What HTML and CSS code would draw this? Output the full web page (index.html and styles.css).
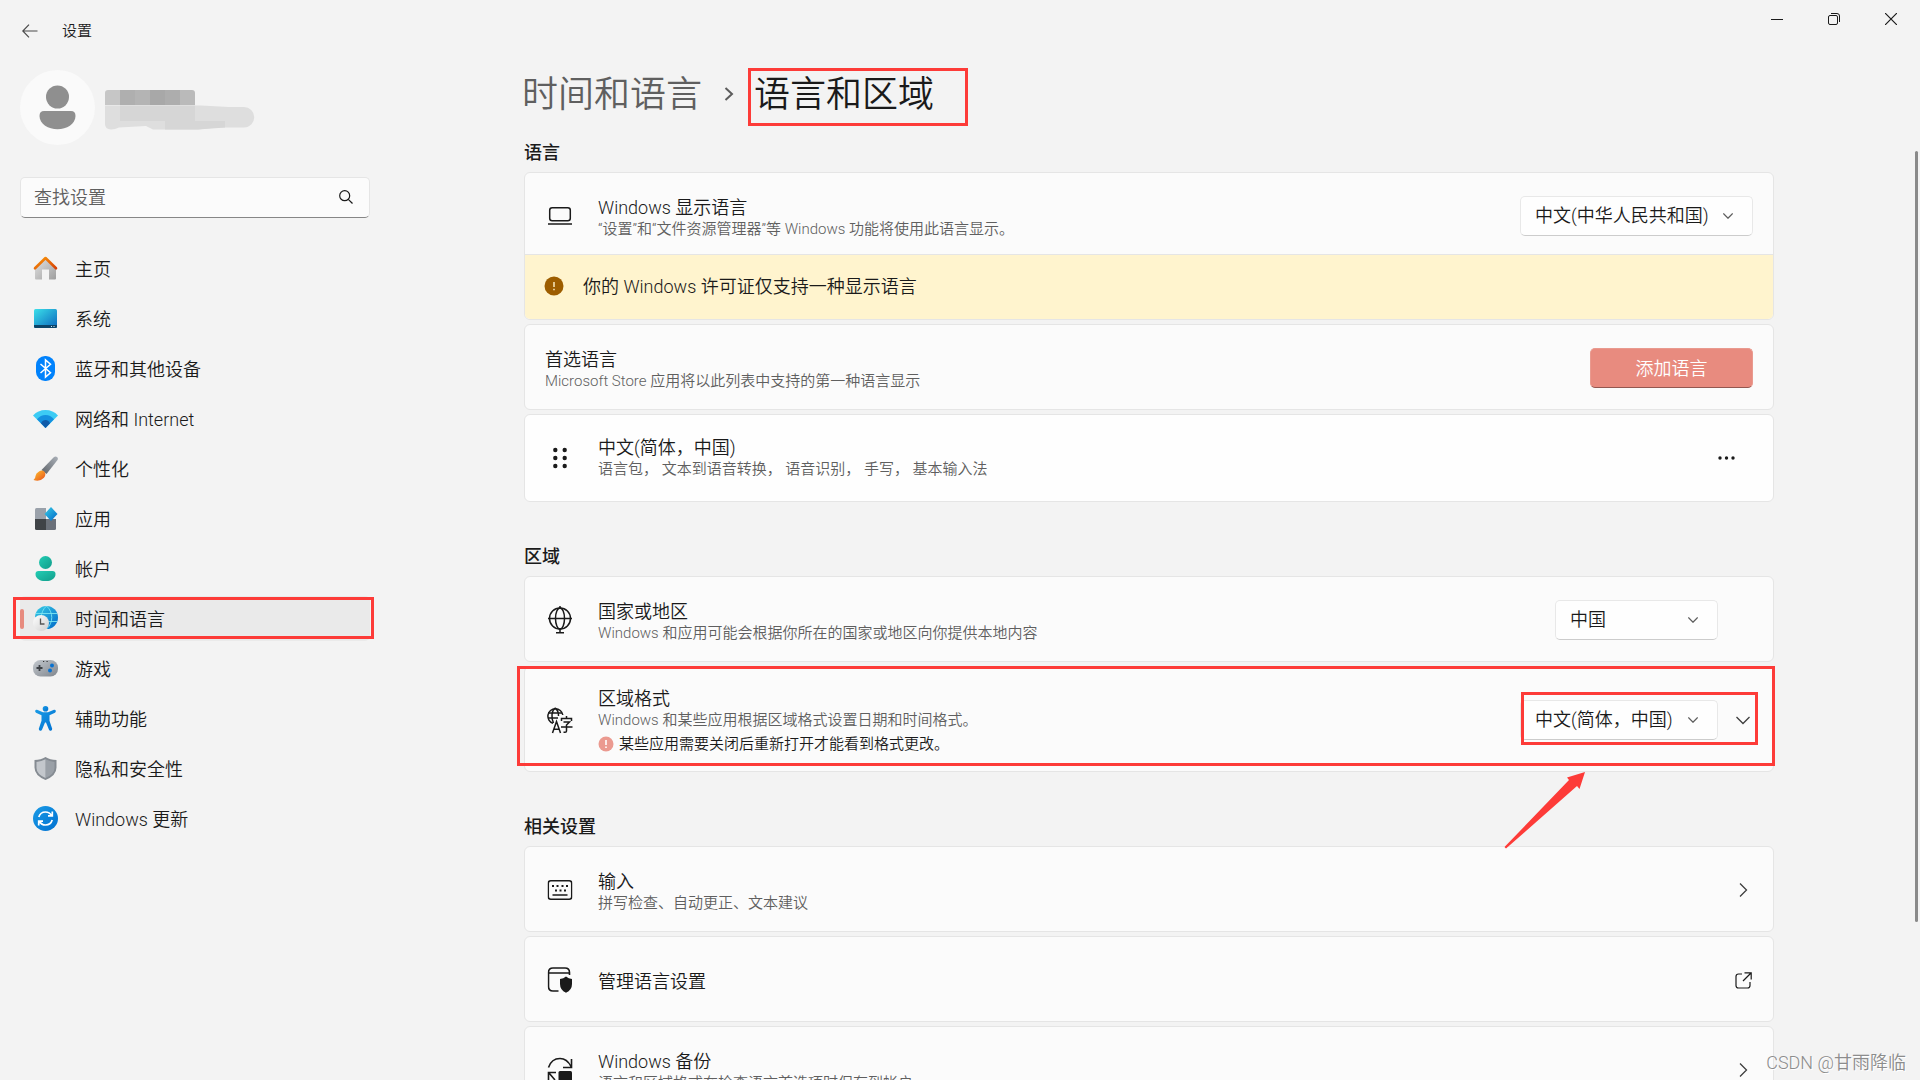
FILE: index.html
```html
<!DOCTYPE html>
<html lang="zh-CN">
<head>
<meta charset="utf-8">
<title>设置</title>
<link rel="stylesheet" href="styles.css">
</head>
<body>
<svg class="defs" width="0" height="0" aria-hidden="true">
  <defs>
    <linearGradient id="g-roof" x1="0" y1="0" x2="1" y2="1"><stop offset="0" stop-color="#fb9b0b"/><stop offset="1" stop-color="#d63f05"/></linearGradient>
    <linearGradient id="g-wall" x1="0" y1="0" x2="1" y2="1"><stop offset="0" stop-color="#e4e4e4"/><stop offset="1" stop-color="#9d9d9d"/></linearGradient>
    <linearGradient id="g-screen" x1="0" y1="0" x2="1" y2="1"><stop offset="0" stop-color="#3be0ea"/><stop offset="1" stop-color="#0a66bd"/></linearGradient>
    <linearGradient id="g-handle" x1="1" y1="0" x2="0" y2="1"><stop offset="0" stop-color="#aab0b8"/><stop offset="1" stop-color="#5d6268"/></linearGradient>
    <linearGradient id="g-bristle" x1="0" y1="0" x2="1" y2="1"><stop offset="0" stop-color="#ffc42e"/><stop offset="1" stop-color="#e8501c"/></linearGradient>
    <linearGradient id="g-green" x1="0" y1="0" x2="1" y2="1"><stop offset="0" stop-color="#23cdb4"/><stop offset="1" stop-color="#119c8a"/></linearGradient>
    <linearGradient id="g-blue" x1="0" y1="0" x2="1" y2="1"><stop offset="0" stop-color="#38cde6"/><stop offset="1" stop-color="#0067c8"/></linearGradient>
    <linearGradient id="g-azure" x1="0" y1="0" x2="1" y2="1"><stop offset="0" stop-color="#1a9be6"/><stop offset="1" stop-color="#0070d0"/></linearGradient>
    <linearGradient id="g-steel" x1="0" y1="0" x2="1" y2="1"><stop offset="0" stop-color="#c3c8ce"/><stop offset="1" stop-color="#80868d"/></linearGradient>
    <linearGradient id="g-clock" x1="0" y1="0" x2="1" y2="1"><stop offset="0" stop-color="#ffffff"/><stop offset="1" stop-color="#cfcfcf"/></linearGradient>
  </defs>
</svg>

<header class="titlebar">
  <button class="back" type="button" aria-label="返回">
    <svg width="16" height="14" viewBox="0 0 16 14"><path d="M15.500 7H1M7 .7L.8 7l6.200 6.300" fill="none" stroke="#4a4a4a" stroke-width="1.200"/></svg>
  </button>
  <span class="app-name">设置</span>
  <div class="window-controls">
    <button type="button" aria-label="最小化"><svg width="12" height="12" viewBox="0 0 12 12"><path d="M0 6.500h12" stroke="#1a1a1a"/></svg></button>
    <button type="button" aria-label="还原"><svg width="12" height="12" viewBox="0 0 12 12" fill="none" stroke="#1a1a1a"><rect x=".5" y="2.500" width="9" height="9" rx="1.500"/><path d="M3 .5h6a2.500 2.500 0 0 1 2.500 2.500v6"/></svg></button>
    <button type="button" aria-label="关闭"><svg width="12" height="12" viewBox="0 0 12 12"><path d="M0 0l12 12M12 0L0 12" stroke="#1a1a1a" stroke-width="1.200"/></svg></button>
  </div>
</header>

<div class="shell">
  <aside class="sidebar">
    <div class="profile">
      <svg class="avatar" viewBox="0 0 75 75"><circle cx="37.500" cy="37.500" r="37.500" fill="#fafafa"/><circle cx="37.500" cy="27" r="11.500" fill="#8f8f8f"/><path d="M24 41h27q4.500 0 4.500 5c0 8-9 13.300-18 13.300S19.500 54 19.500 46q0-5 4.500-5z" fill="#8f8f8f"/></svg>
      <svg class="masked-name" viewBox="0 0 150 40">
        <path d="M0 15.500h96l28 1.500h15a10 10 0 0 1 0 20.500h-28l-18 2H48l-7-3.500-27 1.500q-4 2-8 2Q0 39 0 34V20z" fill="#dedede"/>
        <path d="M15 15.500h75V31h30v6.500l-27 2H60V31H15z" fill="#d6d6d6"/>
        <path d="M3 0h12v15H0V3q0-3 3-3z" fill="#c6c6c6"/><path d="M15 0h15v15H15z" fill="#afafaf"/><path d="M30 0h15v15H30z" fill="#b4b4b4"/><path d="M45 0h15v15H45z" fill="#a8a8a8"/><path d="M60 0h15v15H60z" fill="#adadad"/><path d="M75 0h12q3 0 3 3v12H75z" fill="#bababa"/>
      </svg>
    </div>

    <div class="search">
      <input type="text" placeholder="查找设置" aria-label="查找设置">
      <svg width="14" height="14" viewBox="0 0 14 14" fill="none" stroke="#1a1a1a" stroke-width="1.200"><circle cx="5.700" cy="5.700" r="5"/><path d="M9.300 9.300l4.200 4.200"/></svg>
    </div>

    <nav class="nav">
      <a href="#home">
        <svg viewBox="0 0 25 25"><path d="M2 11L12.500 2 23 11v11.500q0 1-1 1h-6v-10H9v10H3q-1 0-1-1z" fill="url(#g-wall)"/><path d="M2 12.300L12.500 2 23 12.300" fill="none" stroke="url(#g-roof)" stroke-width="2.600" stroke-linecap="round" stroke-linejoin="round"/></svg>
        <span>主页</span></a>
      <a href="#system">
        <svg viewBox="0 0 25 25"><rect x="1" y="3" width="23" height="19" rx="1.500" fill="url(#g-screen)"/><path d="M1 19h23v1.500q0 1.500-1.500 1.500h-20Q1 22 1 20.500z" fill="#0b4468"/><path d="M18 20h1v1h-1zM20.500 20h1v1h-1z" fill="#cde8f5"/></svg>
        <span>系统</span></a>
      <a href="#bluetooth">
        <svg viewBox="0 0 25 25"><rect x="3" y="0" width="19" height="25" rx="9" fill="#0082fc"/><path d="M7.500 8l10 8.700-5 4.300V4l5 4.300-10 8.700" fill="none" stroke="#fff" stroke-width="1.500"/></svg>
        <span>蓝牙和其他设备</span></a>
      <a href="#network">
        <svg viewBox="0 0 25 25"><path d="M12.500 22L0 9.500Q5 4 12.500 4T25 9.500z" fill="#3ccbf4"/><path d="M12.500 22L4 13.300Q7.500 9 12.500 9t8.500 4.300z" fill="#1490df"/><path d="M12.500 22L8 17.300Q9.700 14 12.500 14t4.500 3.300z" fill="#0f5aa8"/></svg>
        <span>网络和 Internet</span></a>
      <a href="#personalization">
        <svg viewBox="0 0 25 25"><path d="M20.500 1.500q2-1.500 3.500-.5t.5 3L13.500 18l-5-4z" fill="url(#g-handle)"/><path d="M6 15.500q3-2.200 5.500.2 2 2.700-.5 6-4 4.300-10.500 2.300 2-1.500 2-4 .3-3 3.500-4.500z" fill="url(#g-bristle)"/></svg>
        <span>个性化</span></a>
      <a href="#apps">
        <svg viewBox="0 0 25 25"><path d="M3.500 2H13v11H2V3.500Q2 2 3.500 2z" fill="#9aa1aa"/><path d="M2 13h11v11H3.500Q2 24 2 22.500z" fill="#3f4347"/><path d="M13 13h10v9.500q0 1.500-1.500 1.500H13z" fill="#6b717a"/><path d="M18 1l6.500 7L18 15l-6.500-7z" fill="url(#g-blue)"/></svg>
        <span>应用</span></a>
      <a href="#accounts">
        <svg viewBox="0 0 25 25"><circle cx="12.500" cy="6.500" r="6.500" fill="url(#g-green)"/><path d="M5.500 15h14q3 0 3 3c0 5-5 7.200-10 7.200S2.500 23 2.500 18q0-3 3-3z" fill="url(#g-green)"/></svg>
        <span>帐户</span></a>
      <a href="#time" class="current" aria-current="page">
        <svg viewBox="0 0 25 25"><circle cx="13.500" cy="11.500" r="11.500" fill="url(#g-blue)"/><path d="M3 7.500h21M3 15.500h21M13.500 0c-7 6-7 17 0 23M13.500 0c7 6 7 17 0 23" fill="none" stroke="#7be4f2" stroke-width=".9"/><circle cx="8" cy="17" r="8" fill="url(#g-clock)"/><path d="M7.500 12.500V18h4" fill="none" stroke="#555" stroke-width="1.300"/></svg>
        <span>时间和语言</span></a>
      <a href="#gaming">
        <svg viewBox="0 0 25 25"><rect x="0" y="4" width="25" height="16.500" rx="7.500" fill="url(#g-steel)"/><path d="M6.500 9v6M3.500 12h6" stroke="#3d4146" stroke-width="1.800"/><path d="M10 5.500h1.200M13.500 5.500h1.200" stroke="#333" stroke-width="1.200"/><circle cx="19" cy="9.500" r="2" fill="#0a72d0"/><circle cx="17" cy="14.500" r="2" fill="#0a72d0"/></svg>
        <span>游戏</span></a>
      <a href="#accessibility">
        <svg viewBox="0 0 25 25" fill="url(#g-azure)"><circle cx="12.500" cy="2.800" r="2.800"/><path d="M4 3.800l6 2.400h5l6-2.400q1.500-.2 1.800 1t-.8 1.900L16.500 9.200v5.500l2.700 8q.1 1.600-1.200 2-1.500.3-2-1l-3-7.200h-1l-3 7.200q-.5 1.300-2 1-1.300-.4-1.200-2l2.700-8V9.200L3 6.700q-1.100-.7-.8-1.900t1.800-1z"/></svg>
        <span>辅助功能</span></a>
      <a href="#privacy">
        <svg viewBox="0 0 25 25"><path d="M12.500 1q4.500 3 11 3v7.500q0 8-11 12.500Q1.500 19.500 1.500 11.500V4q6.500 0 11-3z" fill="#858b92"/><path d="M12.500 3.300q4 2.400 9 2.600v6q0 6-9 10z" fill="#9aa0a7"/><path d="M12.500 3.300q-4 2.400-9 2.600v6q0 6 9 10z" fill="#c3c7cc"/></svg>
        <span>隐私和安全性</span></a>
      <a href="#update">
        <svg viewBox="0 0 25 25"><circle cx="12.500" cy="12.500" r="12.500" fill="url(#g-azure)"/><path d="M5.800 11q1.500-5 6.700-5 4 0 6 3.500M19.200 14q-1.500 5-6.700 5-4 0-6-3.500M19.300 5.500v4.300H15M5.700 19.500v-4.300H10" fill="none" stroke="#fff" stroke-width="1.700"/></svg>
        <span>Windows 更新</span></a>
    </nav>
  </aside>

  <main class="content">
    <h1 class="breadcrumb">
      <a href="#time">时间和语言</a>
      <svg width="10" height="14" viewBox="0 0 10 14"><path d="M1.500 1L8 7l-6.500 6" fill="none" stroke="#5c5c5c" stroke-width="2"/></svg>
      <span class="page-name">语言和区域</span>
    </h1>

    <section>
      <h2>语言</h2>
      <div class="stack">
        <div class="card group">
          <div class="row">
            <div class="icon"><svg width="24" height="18" viewBox="0 0 24 18" fill="none" stroke="#1a1a1a" stroke-width="1.500"><rect x="1.700" y=".8" width="20.600" height="13" rx="2.500"/><path d="M0 17h24"/></svg></div>
            <div class="text"><label class="title" for="display-lang">Windows 显示语言</label><p class="sub">“设置”和“文件资源管理器”等 Windows 功能将使用此语言显示。</p></div>
            <div class="select wide"><select id="display-lang"><option>中文(中华人民共和国)</option></select><svg class="caret" width="10" height="6" viewBox="0 0 10 6"><path d="M.3.500L5 5.200 9.700.500"/></svg></div>
          </div>
          <div class="infobar">
            <svg width="20" height="20" viewBox="0 0 20 20"><circle cx="10" cy="10" r="9.500" fill="#9d5d00"/><path d="M10 6v5M10 12.700v1.500" stroke="#fff4ce" stroke-width="1.400"/></svg>
            <span>你的 Windows 许可证仅支持一种显示语言</span>
          </div>
        </div>
        <div class="card row no-icon">
          <div class="text"><h3 class="title">首选语言</h3><p class="sub">Microsoft Store 应用将以此列表中支持的第一种语言显示</p></div>
          <button class="accent" type="button">添加语言</button>
        </div>
        <div class="card row item">
          <div class="icon"><svg width="14" height="22" viewBox="0 0 14 22" fill="#1a1a1a"><circle cx="2.300" cy="3" r="2.200"/><circle cx="11.700" cy="3" r="2.200"/><circle cx="2.300" cy="11" r="2.200"/><circle cx="11.700" cy="11" r="2.200"/><circle cx="2.300" cy="19" r="2.200"/><circle cx="11.700" cy="19" r="2.200"/></svg></div>
          <div class="text"><h3 class="title">中文(简体，中国)</h3><p class="sub">语言包， 文本到语音转换， 语音识别， 手写， 基本输入法</p></div>
          <button class="more" type="button" aria-label="更多选项"><svg width="17" height="4" viewBox="0 0 17 4" fill="#1a1a1a"><circle cx="2" cy="2" r="1.700"/><circle cx="8.500" cy="2" r="1.700"/><circle cx="15" cy="2" r="1.700"/></svg></button>
        </div>
      </div>
    </section>

    <section>
      <h2>区域</h2>
      <div class="stack">
        <div class="card row">
          <div class="icon"><svg width="24" height="28" viewBox="0 0 24 28" fill="none" stroke="#1a1a1a" stroke-width="1.500"><circle cx="12" cy="12.500" r="10.500"/><ellipse cx="12" cy="12.500" rx="4.500" ry="10.500"/><path d="M0 12.500h24M12 0v2.500M12 23v4M8 26.800h8"/></svg></div>
          <div class="text"><label class="title" for="country">国家或地区</label><p class="sub">Windows 和应用可能会根据你所在的国家或地区向你提供本地内容</p></div>
          <div class="select narrow"><select id="country"><option>中国</option></select><svg class="caret" width="10" height="6" viewBox="0 0 10 6"><path d="M.3.500L5 5.200 9.700.500"/></svg></div>
          <span class="spacer"></span>
        </div>
        <div class="card row tall">
          <div class="icon"><svg width="26" height="27" viewBox="0 0 26 27" fill="none" stroke="#1a1a1a" stroke-width="1.500"><path d="M6 16.300A7.500 7.500 0 1 1 15.800 8"/><path d="M1 6h14M1 11h10M8 1C4.500 4 4 11 6.500 16M8 1c2.500 1.500 3.500 4.500 3.500 8"/><path d="M5.500 26l4-11.500 4 11.500M7 22.300h5"/><path d="M14.500 14v-2.500h10V14M19.500 9v2.500M16.500 15h6l-3 3v6q0 1.300-1.500 1.300h-1.500M14 20h11.500"/></svg></div>
          <div class="text"><label class="title" for="format">区域格式</label><p class="sub">Windows 和某些应用根据区域格式设置日期和时间格式。</p>
            <p class="notice"><svg width="16" height="16" viewBox="0 0 16 16"><circle cx="8" cy="8" r="7.500" fill="#eb9a90"/><path d="M8 4v5M8 10.500V12" stroke="#fff" stroke-width="1.600"/></svg>某些应用需要关闭后重新打开才能看到格式更改。</p></div>
          <div class="marked">
            <div class="select medium"><select id="format"><option>中文(简体，中国)</option></select><svg class="caret" width="10" height="6" viewBox="0 0 10 6"><path d="M.3.500L5 5.200 9.700.500"/></svg></div>
            <button class="expand" type="button" aria-label="展开"><svg class="chev" width="14" height="9" viewBox="0 0 14 9"><path d="M.5 1L7 7.500 13.500 1"/></svg></button>
          </div>
          <svg class="arrow" width="82" height="77" viewBox="0 0 82 77"><path d="M81 0L63 5.500l2 2.500L.5 75l1.500 1.500L73 14l2.500 3z" fill="#fd3b38"/></svg>
        </div>
      </div>
    </section>

    <section>
      <h2>相关设置</h2>
      <div class="stack">
        <a class="card row" href="#typing">
          <div class="icon"><svg width="25" height="20" viewBox="0 0 25 20" fill="none" stroke="#1a1a1a" stroke-width="1.500"><rect x=".8" y=".8" width="23.400" height="18.400" rx="2.500"/><path d="M5 15h15"/><path d="M4.500 6h2M9 6h2M14 6h2M18.500 6h2M7.500 10.500h2M12 10.500h2M16.500 10.500h2" stroke-width="2"/></svg></div>
          <div class="text"><h3 class="title">输入</h3><p class="sub">拼写检查、自动更正、文本建议</p></div>
          <svg class="chev" width="9" height="14" viewBox="0 0 9 14"><path d="M1 .5L7.500 7 1 13.500"/></svg>
        </a>
        <a class="card row" href="#admin-language">
          <div class="icon"><svg width="25" height="26" viewBox="0 0 25 26"><path d="M11 24H5.500Q1 24 1 19.500v-14Q1 1 5.500 1h12Q22 1 22 5.500V8M1 6h21" fill="none" stroke="#1a1a1a" stroke-width="1.600"/><path d="M18.500 9.500q2.500 2.200 6 2.500v5q0 6-6 8.800-6-2.800-6-8.800v-5q3.500-.3 6-2.500z" fill="#1a1a1a"/></svg></div>
          <div class="text"><h3 class="title">管理语言设置</h3></div>
          <svg class="external" width="17" height="17" viewBox="0 0 17 17" fill="none" stroke="#1a1a1a" stroke-width="1.200"><path d="M7 2H3.500Q1 2 1 4.500v9Q1 16 3.500 16h9q2.500 0 2.500-2.500V10M9.500.8h6.700v6.700M16 1L8 9"/></svg>
        </a>
        <a class="card row" href="#backup">
          <div class="icon"><svg width="26" height="26" viewBox="0 0 26 26"><path d="M1.500 10.500Q4.500 1.500 13 1.500q7 0 11 8M24.500 2v8.500H16M1.500 24v-8.500H9M2 16l6 7" fill="none" stroke="#1a1a1a" stroke-width="1.600"/><rect x="11.500" y="14" width="13.500" height="10" rx="1.500" fill="#1a1a1a"/></svg></div>
          <div class="text"><h3 class="title">Windows 备份</h3><p class="sub">语言和区域格式在检查语言首选项时保存到帐户</p></div>
          <svg class="chev" width="9" height="14" viewBox="0 0 9 14"><path d="M1 .5L7.500 7 1 13.500"/></svg>
        </a>
      </div>
    </section>
  </main>
</div>
<div class="scroll-thumb"></div>
<div class="watermark">CSDN @甘雨降临</div>
</body>
</html>
```
FILE: styles.css
```css
* { box-sizing: border-box; }

body {
  margin: 0;
  height: 100vh;
  overflow: hidden;
  display: flex;
  flex-direction: column;
  position: relative;
  background: #f3f3f3;
  color: #1a1a1a;
  font: 350 18px/24px Roboto, "Noto Sans CJK SC", sans-serif;
}

h1, h2, h3, p { margin: 0; font-weight: inherit; }
a { color: inherit; text-decoration: none; }
button, input, select { font: inherit; color: inherit; }
button { background: none; border: 0; padding: 0; }
svg { display: block; flex: none; }
.defs { position: absolute; }

/* Title bar */
.titlebar {
  display: flex;
  align-items: center;
  height: 62px;
  flex: none;
  padding: 0 1px 0 22px;
}
.back { width: 16px; height: 14px; }
.app-name { margin-left: 24px; font-size: 15px; line-height: 20px; }
.window-controls { display: flex; align-self: flex-start; margin-left: auto; }
.window-controls button {
  width: 57px;
  height: 38px;
  display: grid;
  place-items: center;
}

.shell { display: flex; flex: 1; min-height: 0; }

/* Sidebar */
.sidebar { width: 378px; flex: none; padding: 8px 8px 0 20px; }
.profile { display: flex; align-items: flex-start; gap: 10px; }
.avatar { width: 75px; height: 75px; }
.masked-name { width: 150px; height: 40px; margin-top: 20px; }

.search { position: relative; margin-top: 32px; }
.search input {
  display: block;
  width: 100%;
  height: 41px;
  padding: 0 40px 0 13px;
  border: 1px solid #e5e5e5;
  border-bottom-color: #868686;
  border-radius: 5px;
  background: #fbfbfb;
}
.search input::placeholder { color: #5f5f5f; opacity: 1; }
.search svg { position: absolute; right: 17px; top: 13px; }

.nav { display: flex; flex-direction: column; gap: 5px; margin-top: 28px; }
.nav a {
  position: relative;
  display: flex;
  align-items: center;
  gap: 17px;
  height: 45px;
  padding-left: 13px;
  border-radius: 5px;
}
.nav svg { width: 25px; height: 25px; }
.nav span { padding-top: 2px; }
.nav .current { background: #eaeaea; }
.nav .current::before {
  content: "";
  position: absolute;
  left: 0;
  top: 13px;
  width: 4px;
  height: 20px;
  border-radius: 2px;
  background: #e78b7f;
}
.nav .current::after {
  content: "";
  position: absolute;
  inset: 1px -4px 2px -7px;
  border: 3px solid #fd3b38;
}

/* Content */
.content { flex: 1; min-width: 0; overflow: hidden; }
.breadcrumb, .content section { max-width: 1250px; margin: 0 auto; }
.content .breadcrumb {
  display: flex;
  align-items: center;
  max-width: 1254px;
  height: 64px;
  margin-bottom: 6px;
  font-size: 36px;
  line-height: 48px;
}
.breadcrumb a { color: #5f5f5f; padding-top: 2px; }
.breadcrumb svg { margin: 0 20px 0 22px; }
.page-name { position: relative; padding-top: 2px; }
.page-name::after {
  content: "";
  position: absolute;
  inset: -1px -34px -7px -6px;
  border: 3px solid #fd3b38;
}

h2 { padding-top: 2px; font-size: 18px; font-weight: 500; line-height: 38px; }
section + section { padding-top: 34px; }
.stack { display: flex; flex-direction: column; gap: 4px; }

.card {
  position: relative;
  background: #fbfbfb;
  border: 1px solid #e5e5e5;
  border-radius: 6px;
}
.row {
  display: flex;
  align-items: center;
  min-height: 86px;
  padding-top: 2px;
  padding-right: 20px;
}
.icon { width: 73px; flex: none; }
.icon svg { margin-left: 35px; transform: translateX(-50%); }
.no-icon { padding-left: 20px; }
.text { flex: 1; min-width: 0; padding-top: 4px; }
.title { display: block; font-size: 18px; line-height: 22px; }
.sub { font-size: 15px; line-height: 20px; color: #5f5f5f; }
.group .row { padding-top: 0; }
.item { background: #fefefe; min-height: 88px; padding-top: 0; }
.item .text { padding: 0; }
.tall { min-height: 106px; }
.tall .text { padding-top: 2px; }
.notice {
  display: flex;
  align-items: center;
  gap: 5px;
  margin-top: 4px;
  font-size: 15px;
  line-height: 20px;
}

.infobar {
  position: relative;
  display: flex;
  align-items: center;
  gap: 19px;
  height: 65px;
  margin-top: -5px;
  padding: 0 19px 2px;
  border-top: 1px solid #e5e5e5;
  border-radius: 0 0 5px 5px;
  background: #fff4ce;
}
.infobar span { padding-top: 2px; }

/* Controls */
.select { position: relative; }
.select select {
  appearance: none;
  display: block;
  width: 100%;
  height: 40px;
  padding: 0 14px;
  border: 1px solid #e8e8e8;
  border-bottom-color: #cccccc;
  border-radius: 5px;
  background: #fefefe;
}
.wide { width: 233px; }
.medium { width: 198px; }
.narrow { width: 163px; }
.caret {
  position: absolute;
  right: 20px;
  top: 17px;
  pointer-events: none;
}
.caret path, .chev path { fill: none; stroke: #5c5c5c; stroke-width: 1.3; }
.chev path { stroke: #3d3d3d; }
.spacer { width: 35px; }
.accent {
  width: 163px;
  height: 40px;
  padding-top: 2px;
  border: 1px solid #e99a8f;
  border-bottom-color: #935750;
  border-radius: 5px;
  background: #e88b7f;
  color: #fff;
}
.more { padding: 18px; }
.row > .chev { margin-right: 5px; }
.row > .external { margin-right: 1px; }

.marked { position: relative; display: flex; align-items: center; }
.marked::after {
  content: "";
  position: absolute;
  inset: -8px -5px -5px 1px;
  border: 3px solid #fd3b38;
  pointer-events: none;
}
.expand { margin-left: 18px; padding-right: 3px; }
.tall::after {
  content: "";
  position: absolute;
  inset: -1px -2px 5px -8px;
  border: 3px solid #fd3b38;
  pointer-events: none;
}
.arrow { position: absolute; right: 187px; bottom: -78px; z-index: 1; }

/* Overlays */
.scroll-thumb {
  position: absolute;
  right: 2px;
  top: 151px;
  bottom: 158px;
  width: 3px;
  border-radius: 2px;
  background: #8a8a8a;
}
.watermark {
  position: absolute;
  right: 14px;
  bottom: 5px;
  color: #8c8c8c;
  text-shadow: 1px 1px 0 #fff;
}
```
